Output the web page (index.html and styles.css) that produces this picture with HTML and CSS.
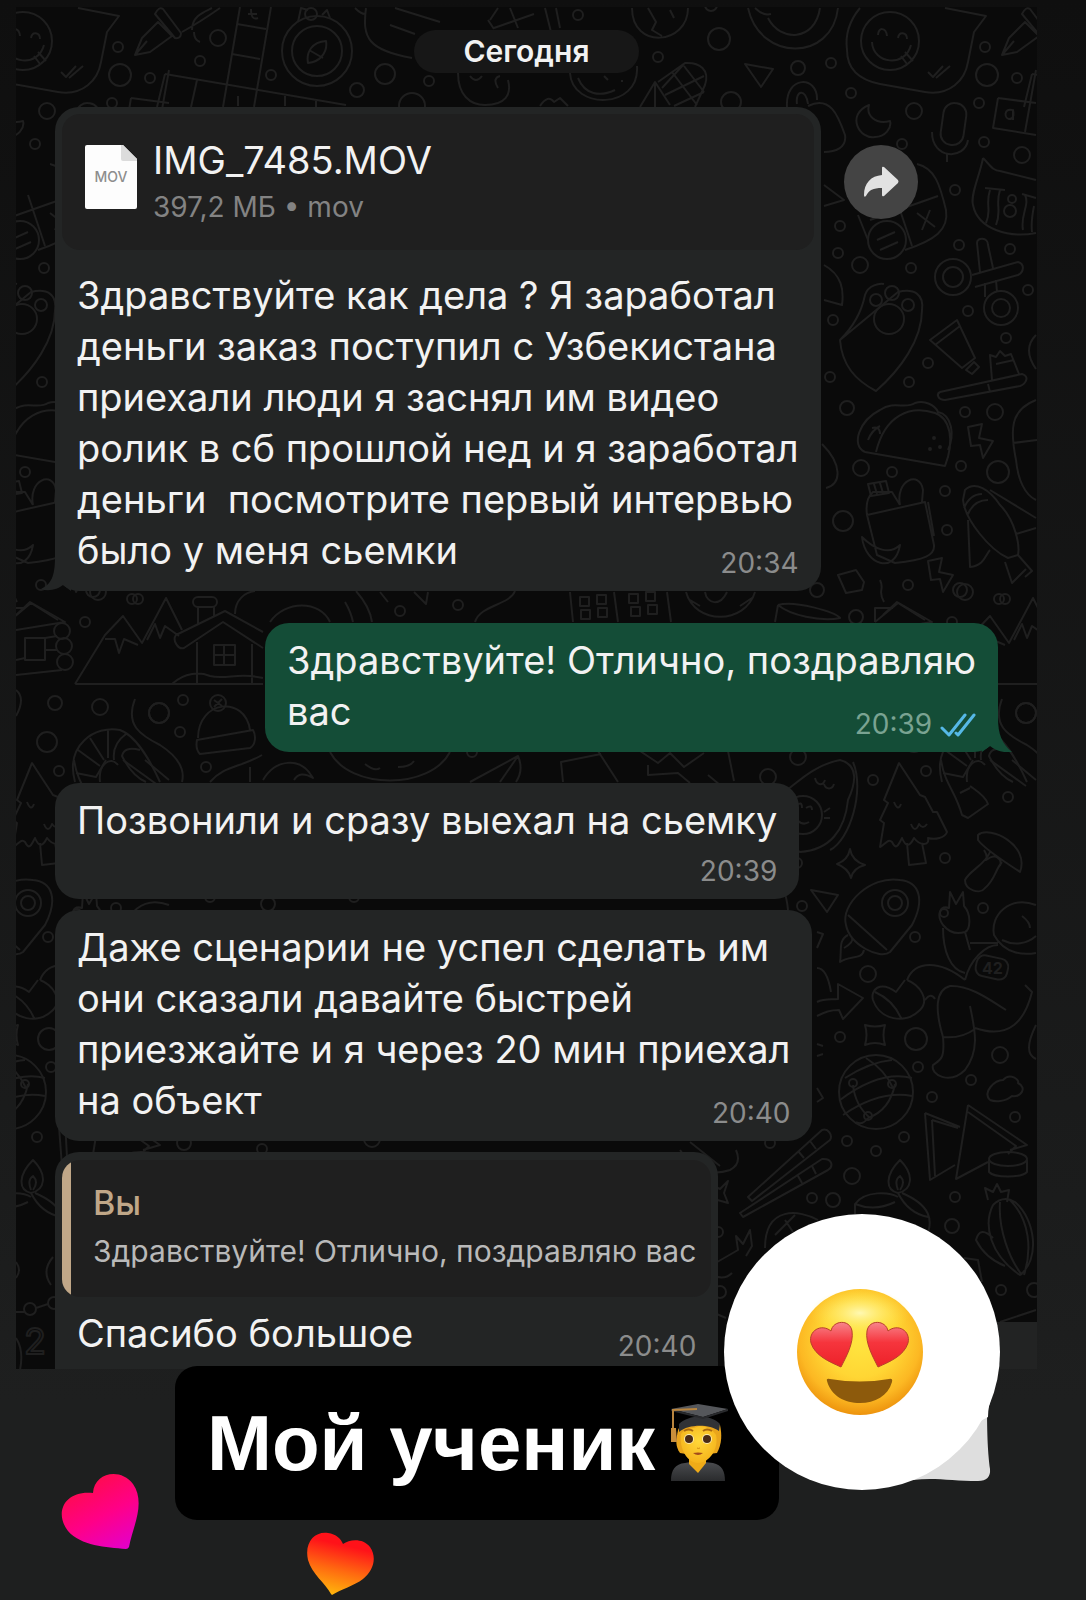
FILE: index.html
```
<!DOCTYPE html>
<html lang="ru">
<head>
  <meta charset="UTF-8">
  <meta name="viewport" content="width=device-width, initial-scale=1.0">
  <title>Мой ученик</title>
  <link rel="stylesheet" href="styles.css">
</head>

<body>
  <main class="story">
    <section class="chat">

      <!-- Wallpaper, the doodles repeat every 867 units -->
      <svg class="wallpaper" viewBox="16 7 1021 1363" preserveAspectRatio="xMinYMin slice" aria-hidden="true">
        <g id="doodles">
          <!-- bubbles -->
          <g>
            <circle cx="118" cy="47" r="5"/><circle cx="120" cy="75" r="11"/><circle cx="150" cy="78" r="5"/><circle cx="200" cy="61" r="5"/>
            <circle cx="218" cy="38" r="8"/><circle cx="271" cy="75" r="5"/><circle cx="357" cy="90" r="7"/><circle cx="385" cy="74" r="10"/>
            <circle cx="429" cy="81" r="5"/><circle cx="47" cy="111" r="8"/><circle cx="112" cy="103" r="5"/><circle cx="35" cy="144" r="5"/>
            <circle cx="412" cy="106" r="13"/><circle cx="578" cy="15" r="5"/><circle cx="711" cy="5" r="6"/><circle cx="719" cy="39" r="11"/>
            <circle cx="658" cy="57" r="5"/><circle cx="798" cy="68" r="7"/><circle cx="831" cy="63" r="5"/><circle cx="851" cy="93" r="5"/>
            <circle cx="731" cy="102" r="10"/><circle cx="984" cy="142" r="5"/><circle cx="1022" cy="155" r="8"/><circle cx="955" cy="190" r="5"/>
            <circle cx="840" cy="226" r="5"/><circle cx="838" cy="253" r="5"/><circle cx="860" cy="265" r="8"/><circle cx="911" cy="268" r="5"/>
            <circle cx="959" cy="245" r="5"/><circle cx="1010" cy="249" r="5"/><circle cx="1028" cy="290" r="5"/><circle cx="968" cy="311" r="5"/>
            <circle cx="1006" cy="338" r="5"/><circle cx="833" cy="320" r="5"/><circle cx="928" cy="363" r="5"/><circle cx="909" cy="382" r="5"/>
            <circle cx="830" cy="377" r="5"/><circle cx="847" cy="408" r="7"/><circle cx="965" cy="412" r="5"/><circle cx="995" cy="412" r="8"/>
            <circle cx="861" cy="468" r="8"/><circle cx="892" cy="472" r="5"/><circle cx="961" cy="466" r="5"/><circle cx="998" cy="472" r="11"/>
            <circle cx="945" cy="491" r="5"/><circle cx="843" cy="521" r="10"/><circle cx="947" cy="530" r="5"/><circle cx="817" cy="590" r="7"/>
            <circle cx="908" cy="585" r="5"/><circle cx="965" cy="592" r="8"/><circle cx="1005" cy="599" r="5"/><circle cx="856" cy="617" r="7"/>
            <circle cx="1026" cy="713" r="10"/><circle cx="798" cy="757" r="8"/><circle cx="768" cy="777" r="8"/><circle cx="873" cy="780" r="5"/>
            <circle cx="926" cy="771" r="5"/><circle cx="797" cy="863" r="5"/><circle cx="802" cy="906" r="5"/><circle cx="915" cy="937" r="5"/>
            <circle cx="945" cy="858" r="5"/><circle cx="983" cy="908" r="5"/><circle cx="1008" cy="797" r="5"/><circle cx="868" cy="974" r="8"/>
            <circle cx="840" cy="1037" r="5"/><circle cx="916" cy="1039" r="11"/><circle cx="1000" cy="1055" r="8"/><circle cx="918" cy="1067" r="5"/>
            <circle cx="971" cy="1080" r="5"/><circle cx="932" cy="1097" r="5"/><circle cx="1015" cy="1117" r="5"/><circle cx="904" cy="1137" r="5"/>
            <circle cx="847" cy="1141" r="5"/><circle cx="876" cy="1151" r="5"/><circle cx="770" cy="1143" r="5"/><circle cx="852" cy="1176" r="8"/>
            <circle cx="833" cy="1200" r="7"/><circle cx="812" cy="1198" r="5"/><circle cx="955" cy="1197" r="5"/><circle cx="952" cy="1226" r="7"/>
            <circle cx="132" cy="599" r="5"/><circle cx="85" cy="622" r="5"/><circle cx="93" cy="590" r="7"/><circle cx="55" cy="703" r="7"/>
            <circle cx="100" cy="707" r="8"/><circle cx="183" cy="700" r="5"/><circle cx="180" cy="732" r="5"/><circle cx="47" cy="742" r="10"/>
            <circle cx="206" cy="767" r="5"/><circle cx="400" cy="611" r="5"/><circle cx="458" cy="605" r="5"/><circle cx="472" cy="752" r="5"/>
            <circle cx="718" cy="1232" r="5"/><circle cx="720" cy="1292" r="6"/><circle cx="1001" cy="1290" r="5"/><circle cx="1034" cy="1290" r="7"/>
            <circle cx="268" cy="904" r="7"/><circle cx="210" cy="897" r="5"/><circle cx="354" cy="897" r="5"/><circle cx="184" cy="1143" r="7"/>
            <circle cx="262" cy="1149" r="5"/><circle cx="372" cy="1139" r="8"/>
          </g>
          <!-- smiling speech balloon -->
          <circle cx="890" cy="41" r="29"/>
          <path d="M860 8C850 20 845 35 847 50C847 70 860 80 880 84L925 92C950 96 965 80 968 62L974 32L986 16L945 8M878 35c0-8 8-8 9 1M898 38c1-7 9-6 9 1M872 42C873 64 905 68 911 45M901 56l6 8M905 52l8 9M928 72l5 5 10-11M936 78l14-12"/>
          <!-- pen -->
          <path d="M135 55L142 38L158 22L172 36L150 52ZM135 55l12-14M155 14q4-8 8-5l18 24q0 6-6 5zM182 32C200 22 210 15 220 8M192 30c0-14 12-18 20-22M194 32q0 8 6 10"/>
          <!-- compass -->
          <circle cx="317" cy="51" r="35"/><circle cx="317" cy="51" r="25"/><circle cx="311" cy="14" r="6"/>
          <path d="M308 63C306 52 312 42 326 41C328 52 320 62 308 63ZM309 50l14 8M298 22l3-14 7 2M322 15l5-5 3 8"/>
          <!-- crossword -->
          <path d="M240 7L223 107M271 7L254 107M237 24L266 29M232 54L260 59M165 74L346 105M165 74L157 107M197 80L191 107M285 96v10M316 101v6M251 9q0 12 7 9M248 14h9M238 96v10M998 98l38 5M998 98l-5 30 43 7M1036 70l-11 62M1012 110c-8-2-8 8-3 9q6 0 4-9v10"/>
          <!-- hand, planets, faces along the top -->
          <path d="M366 8C362 38 368 50 412 58M390 25L415 34M395 8L440 22M355 8q6 6 10 6M458 73C458 95 470 105 485 105C505 105 512 95 508 80M470 76q6 8 12 0M498 88q-6-10 2-12M490 20l8-12M488 20l6 9M494 28l40-14M510 8l8 20M570 73C572 110 640 110 637 66M578 78C585 95 600 97 615 90M540 106q8-12 14-4l6-4 8 8M604 76l4 4M622 80v2M632 8C632 50 688 45 688 8M648 8l8 14-4 8 10 6M670 10l4 8M748 8C760 62 832 62 838 8M768 18C780 42 815 42 820 8M755 8q8 8 16 6M545 8l6 24M556 8l4 20"/>
          <!-- corn -->
          <path d="M640 107L655 82L670 105M655 84v24M658 82L685 63C700 62 710 70 705 85L695 107M672 72L697 105M684 66l20 26M665 95L704 76M674 106l30-14M662 88l22-24"/>
          <path d="M745 64L773 69L761 87Z"/>
          <!-- paper clip, moon, microphone -->
          <path d="M787 107C785 75 818 75 817 100M797 104C795 90 806 88 808 104M808 106C830 95 838 115 845 135C847 148 835 152 824 152M824 185l20 15-20 6M824 265c18 10 20 25 18 40l-18-5M869 105C845 115 860 140 875 137C885 137 892 128 890 121C875 125 866 115 869 105ZM932 132C932 160 965 160 968 140M947 153v9"/>
          <rect x="942" y="103" width="23" height="42" rx="11" transform="rotate(8 953 124)"/>
          <!-- cat -->
          <path d="M983 158C990 165 993 171 1000 171L1036 180M983 158C980 175 970 195 973 205C978 230 1010 238 1036 233M985 188l20 2M1022 194l14 4M990 190c-5 15 2 20-4 33M1000 190c-5 15 2 20-4 35M1025 195c5 10-5 20-2 35M1034 206c-2 10-3 18-2 26"/>
          <circle cx="1010" cy="211" r="6"/><circle cx="1012" cy="199" r="4"/>
          <!-- calculator -->
          <path d="M917 164C935 168 940 185 946 210C949 230 935 240 905 250M858 215L868 240M912 246L895 195M870 220L938 196M877 240l18-8M880 250l18-8M917 213l18 14M930 210l-8 20"/>
          <circle cx="887" cy="240" r="19"/>
          <!-- scissors -->
          <circle cx="953" cy="277" r="18"/><circle cx="953" cy="277" r="10"/><circle cx="1001" cy="308" r="17"/><circle cx="1001" cy="308" r="9"/>
          <path d="M972 275L1018 262C1025 264 1024 272 1018 275L975 287M980 272L977 243C977 237 988 237 988 245L993 268M985 283v14M996 280l1 12"/>
          <!-- paw on a guitar pick -->
          <path d="M840 340C855 325 862 310 865 295C868 285 880 283 884 284M898 292C915 288 924 295 922 310C922 340 900 370 876 391C855 380 842 365 840 340Z"/>
          <circle cx="889" cy="319" r="15"/><circle cx="876" cy="300" r="6"/><circle cx="892" cy="293" r="7"/><circle cx="908" cy="305" r="6"/>
          <!-- tube and brush -->
          <path d="M930 340L957 320L975 358L962 368ZM935 345l25-19M966 370l8-8 5 5-7 7zM940 392L1022 374C1030 376 1026 384 1020 386L945 400C938 400 936 394 940 392M992 380L990 355l6 2 4-6 5 5 6-2 8 20M988 384l2 8M996 364l18-4"/>
          <!-- taco -->
          <path d="M865 452L945 466C955 440 950 418 935 413C910 405 885 415 876 452M865 452C850 445 860 420 880 410C895 400 905 410 915 403C925 400 935 405 938 412C952 415 955 435 948 450M872 428q8-2 8 6M868 440q4-10 12-14"/>
          <circle cx="934" cy="438" r="1"/><circle cx="930" cy="449" r="1"/><circle cx="940" cy="447" r="1"/>
          <path id="bolt" d="M968 427l14-3-3 14 14 3-10 17-3-13-9 1z"/>
          <use href="#bolt" x="-40" y="134"/>
          <!-- lunch bag -->
          <path d="M867 515L925 502L934 545C935 555 925 560 895 563L877 555ZM867 515C865 500 870 495 873 492L892 492L900 505M868 484l18-3 3 12-18 3zM874 484l3 10M880 483l3 10M900 505C895 480 920 470 923 490L922 502M928 502l6 34M862 537C865 565 895 575 900 545C890 555 875 550 862 537ZM822 444c20 20 20 40 4 44M838 575l18-5 8 12-2 8-16 3z"/>
          <!-- shrimp roll -->
          <path d="M965 490C975 480 990 490 1000 505C1015 520 1020 545 1018 555L1008 558C990 550 965 520 963 500ZM964 508q6-14 18-14M968 514q6-14 20-14M968 520L970 567C985 565 985 555 990 550M990 490L1036 518M1005 562l7 21 14-14M1018 555l14 16-7 6M1016 534L1036 528M1036 400C1010 410 1010 430 1016 460C1018 480 1025 495 1036 500M1013 443l24-3M1036 335q-14 14 0 34"/>
          <!-- mountains and houses -->
          <path d="M75 684L105 635L123 616L142 643L166 598L182 630M75 684H263M105 639l10 0 4 14 5-14 14 6M147 640l8-16 5 14 5-12 14 10M176 635C172 640 178 650 184 648L223 622L263 648M176 635L225 611L263 632M197 642V684M252 644v40M224 645v20M214 655h21M198 607v18M214 607v10M172 684C185 672 200 672 210 676C225 680 240 672 263 678M235 614C235 600 245 592 255 591M270 622C285 600 320 600 330 622M345 602q6 10 8 20M356 591q14 16 16 31M475 622C480 605 510 605 515 591"/>
          <rect x="214" y="645" width="21" height="20"/><rect x="193" y="597" width="24" height="10" rx="5"/>
          <path d="M16 615L30 602L65 622L16 630M16 675L62 670M45 638l12-2M45 650l12 0M16 660l9-2"/>
          <circle cx="62" cy="631" r="8"/><circle cx="64" cy="646" r="8"/><circle cx="65" cy="662" r="8"/><rect x="25" y="638" width="20" height="22"/>
          <!-- buildings, doughnut, cup, letter -->
          <path d="M570 592l3 30M614 592l4 30M667 592l4 30M686 592C695 625 745 625 755 592M705 592c2 12 15 15 22 0M690 600l10 6M740 606l12-8M778 605L775 622M778 605C795 600 835 612 840 618C820 622 790 615 778 605M875 622v-14h18M875 622L898 603L925 620M880 580c5 10-3 10 4 22M380 592l8 10M414 592l12 12 2-12"/>
          <rect x="580" y="597" width="9" height="9"/><rect x="597" y="595" width="9" height="9"/><rect x="581" y="610" width="9" height="9"/><rect x="598" y="608" width="9" height="9"/>
          <rect x="629" y="594" width="9" height="9"/><rect x="646" y="592" width="9" height="9"/><rect x="631" y="607" width="9" height="9"/><rect x="648" y="605" width="9" height="9"/>
          <!-- hat and prawn -->
          <circle cx="159" cy="713" r="10"/><circle cx="218" cy="703" r="8"/>
          <path d="M197 740L253 730C256 735 256 745 250 748L200 754C196 750 196 745 197 740ZM198 738C198 700 245 695 250 730M214 700l8 6M222 699l-8 8M75 782C65 745 95 725 120 730C135 735 150 760 160 782M100 782C98 765 110 755 118 765M78 750l22 16M90 738l14 22M108 730l0 28M126 734q-14 10-12 26M140 750q-16-4-18 6 10 20 24 26M135 699C125 725 140 735 160 745C180 758 185 770 182 782M16 690q10 8 0 26"/>
          <path d="M210 782C225 765 240 768 262 755M250 767v15M263 780C275 760 300 755 313 778Q300 770 294 780M330 752C350 790 430 790 450 752M365 764q10 8 15 4M398 767q12 0 16-6M470 782L518 756Q524 770 516 782M500 782l18-26M563 782l-2-20 40-8M598 751l20 31M640 751l18 12 12-10 14 14 20-14M648 765v10l30-2 12 10M708 775l12 10M728 751l6 30"/>
          <!-- avocado -->
          <path d="M787 790C800 780 815 765 840 760C860 765 855 785 848 800C845 830 830 850 800 852L788 846M853 762C865 790 850 840 830 850M815 778c2 8 8 8 10 2M824 784c2 6 8 6 10 0M796 806q6-6 6 2M806 808q6-4 6 2M797 820q6 6 12 2M824 812l6-4M824 818h6"/>
          <circle cx="803" cy="815" r="19"/>
          <!-- fir tree -->
          <path d="M899 763L884 800L888 803L880 820L884 823L880 847C885 845 888 838 892 842C896 850 898 846 902 838C906 848 910 846 914 838C920 846 930 846 928 838C935 840 945 838 947 832L937 812L933 812L925 797L920 795ZM907 843l2 22 17-2-4-20M894 802q4 10 7 2M911 824q4 10 8 0 4 6 8 0"/>
          <!-- sweet and mushroom -->
          <path d="M941 760C945 785 955 790 962 815L968 818 988 804C985 795 975 790 970 786M943 773l20 4 10-17M960 793l10-5M990 760l36 26M1012 760l24 20M978 835C990 825 1030 845 1020 872C1010 865 985 850 978 840ZM990 852C985 865 970 870 965 880C965 890 980 895 985 888C995 880 995 870 1002 862M984 850q4 6 2 10 8-6 12-2 4 2 2 8"/>
          <!-- stars -->
          <path d="M850 849Q852 861 865 865Q853 868 851 878Q848 868 837 864Q848 860 850 849ZM865 1025q10 3 20 0q-3 10 0 20q-10-4-20 0q3-10 0-20zM811 890l27 5-11 17z"/>
          <!-- rocket -->
          <path d="M846 925C840 905 870 875 900 880C920 882 925 900 912 925L890 952C880 960 850 945 846 925ZM848 915L887 950M848 935C838 940 842 950 840 962C850 955 862 960 864 950M844 948q10-6 8-10M783 888q4 10 5 22M817 932l6 2-6 14M817 968q10 0 14 24"/>
          <circle cx="895" cy="903" r="13"/><circle cx="895" cy="903" r="7"/>
          <!-- astronaut -->
          <path d="M943 925C936 915 940 905 949 908L950 892l6 12 7-12 1 14C972 915 970 930 965 932Q952 936 943 925M943 928C943 950 950 970 965 973M970 950l-5-18M970 943H998M1036 905C1010 895 990 915 994 935C1005 955 1025 955 1036 953M1002 940c12 6 25 4 34-4M1022 916q8 6 8 12M965 980C970 960 985 945 998 945M907 980C915 960 940 960 965 980M905 980L896 992C880 980 870 990 873 1000C880 1020 905 1025 920 1010C930 1000 920 985 907 980M875 992q18 8 26 26M925 1000q6-8 10-1M943 1037C935 1010 935 990 950 986C970 985 990 1000 1006 1010M970 1006C975 1030 980 1050 965 1070C950 1085 930 1075 933 1065C940 1060 945 1060 943 1037M943 1037q18 2 32-8M975 1028C1010 1040 1025 1020 1032 992L1025 985"/>
          <rect x="976" y="957" width="32" height="21" rx="8" transform="rotate(12 992 967)"/>
          <circle cx="944" cy="913" r="4"/>
          <!-- arrow, globe, cloud -->
          <path d="M817 1002C825 998 832 1000 838 999L838 984L863 998L843 1019L839 1010C830 1010 825 1012 817 1016M817 1044l6 2M817 1056l6-2M817 1088l6 10-6 4M845 1078Q870 1062 892 1060M840 1100Q880 1070 912 1078M843 1115Q880 1090 912 1096M853 1085Q855 1105 870 1118M866 1058Q885 1070 893 1088M868 1118Q890 1110 895 1084M868 1118Q862 1126 856 1122M990 1100C982 1092 995 1080 1003 1080C1010 1072 1020 1080 1018 1083C1028 1088 1020 1098 1012 1096C1005 1102 995 1102 990 1100M1036 1025q-14 28 0 34"/>
          <circle cx="876" cy="1092" r="37"/><circle cx="853" cy="1083" r="4"/><circle cx="892" cy="1084" r="4"/><circle cx="868" cy="1116" r="4"/>
          <!-- sandwich and sushi -->
          <path d="M925 1113L960 1127M925 1113L930 1180L955 1165M932 1120l3 56M932 1120l26 8M968 1105L1027 1145L1010 1150M968 1105L956 1179L988 1162M968 1112l48 34-8 8M989 1160v12c5 6 33 6 38 0v-12"/>
          <ellipse cx="1008" cy="1159" rx="19" ry="7"/>
          <!-- chopsticks -->
          <path d="M748 1197L822 1130C828 1128 833 1135 830 1140L752 1201ZM740 1213L822 1159C832 1158 834 1166 828 1170L743 1217ZM798 1151l6 7M810 1141l6 8M798 1176l4 7M812 1166l4 8"/>
          <!-- candle, cactus, lemon -->
          <path d="M900 1160C885 1175 885 1190 898 1193C912 1190 915 1175 900 1160ZM898 1190q-4-10 2-14 6 6 0 14M855 1214V1204C865 1190 890 1192 898 1197M855 1204q20 8 40-2M902 1193C930 1205 935 1220 925 1240M898 1193q10 20 30 24M988 1200l-3-12 8 4 4-8 4 8 8-2-2 12M993 1205C983 1225 990 1255 1020 1275C1040 1260 1036 1220 1015 1202C1005 1196 998 1200 993 1205M1000 1202C998 1230 1010 1260 1022 1275M1010 1200c20 20 22 50 14 75M993 1238Q980 1225 976 1240Q985 1258 1005 1266M765 1248C765 1205 800 1210 818 1220M775 1235l20-20M785 1220l8 12M712 1265L738 1250 736 1236 743 1244 750 1230 752 1246 746 1256M712 1185l8 4 8-8-4 12 4 10-14-4M680 1150q20 30 50 20 12-6 6-20M690 1142l30 24M964 1258l14 2 4 22M1000 1322l36-12M712 1312l14 6M712 1275q12 6 20-2"/>
          <!-- left edge -->
          <circle cx="30" cy="1309" r="6"/><circle cx="54" cy="1303" r="6"/>
          <path d="M16 1312h8M36 1308l12-4M16 1338q8 12 4 32M53 1257q-12 14-2 28M16 1262q6 8 0 16"/>
        </g>
        <use href="#doodles" x="-867"/>
        <use href="#doodles" x="867"/>
        <text class="doodle-num" x="982" y="974">42</text>
        <text class="doodle-num big" x="24" y="1354">2</text>
      </svg>

      <div class="composer"></div>

      <time class="date">Сегодня</time>

      <article class="bubble in first">
        <div class="file">
          <svg class="file-icon" viewBox="0 0 52 64" aria-hidden="true">
            <path d="M2 0H38L52 14V62Q52 64 50 64H2Q0 64 0 62V2Q0 0 2 0Z" fill="#fdfdfd"/>
            <path d="M36 0H38L52 14V16H38Q36 16 36 14Z" fill="#dcdcdc"/>
            <text x="26" y="37" text-anchor="middle" class="file-ext">MOV</text>
          </svg>
          <div>
            <div class="file-name">IMG_7485.MOV</div>
            <div class="file-info">397,2 МБ • mov</div>
          </div>
        </div>
        <p>Здравствуйте как дела ? Я заработал<br>деньги заказ поступил с Узбекистана<br>приехали люди я заснял им видео<br>ролик в сб прошлой нед и я заработал<br>деньги&nbsp; посмотрите первый интервью<br>было у меня сьемки</p>
        <time>20:34</time>
        <svg class="tail" viewBox="0 0 30 34" aria-hidden="true"><path d="M14 0C14 20 10 27 0 32C8 35 17 32 22 28L30 34V0Z" fill="#232525"/></svg>
      </article>

      <article class="bubble out">
        <p>Здравствуйте! Отлично, поздравляю<br>вас</p>
        <time>20:39
          <svg class="ticks" viewBox="0 0 36 24" aria-label="Прочитано"><path d="M2 15L9 22L25 2M16 20L18 22L34 2" fill="none" stroke="#56b8e6" stroke-width="3" stroke-linecap="round" stroke-linejoin="round"/></svg>
        </time>
        <svg class="tail" viewBox="0 0 30 34" aria-hidden="true"><path d="M16 0C16 16 20 26 30 34C22 35 14 33 8 28L0 34V0Z" fill="#144d37"/></svg>
      </article>

      <article class="bubble in">
        <p>Позвонили и сразу выехал на сьемку</p>
        <time class="below">20:39</time>
      </article>

      <article class="bubble in">
        <p>Даже сценарии не успел сделать им<br>они сказали давайте быстрей<br>приезжайте и я через 20 мин приехал<br>на объект</p>
        <time>20:40</time>
      </article>

      <article class="bubble in last">
        <blockquote class="quote">
          <b>Вы</b>
          <span>Здравствуйте! Отлично, поздравляю вас</span>
        </blockquote>
        <p>Спасибо большое</p>
        <time>20:40</time>
      </article>

      <button class="forward" type="button" aria-label="Переслать">
        <svg viewBox="0 0 36 32"><path d="M19 2Q19 0 21 1L35 14Q36 15.500 35 17L21 30Q19 31 19 29V22C10 22 6 24 3 30Q1 32 1 29C1 17 8 10 19 9Z" fill="#e2e2e2"/></svg>
      </button>
    </section>

    <h1 class="caption">Мой ученик
      <svg class="student" viewBox="0 0 60 78" aria-hidden="true">
        <defs>
          <linearGradient id="gown" x1="0" y1="0" x2="0" y2="1"><stop offset="0" stop-color="#4b4d50"/><stop offset="1" stop-color="#2a2b2d"/></linearGradient>
          <radialGradient id="skin" cx=".5" cy=".4" r=".6"><stop offset="0" stop-color="#ffd83a"/><stop offset="1" stop-color="#f5b31b"/></radialGradient>
        </defs>
        <path d="M2 77C2 66 6 60 16 59L27 57 44 59C53 61 56 67 56 77Z" fill="url(#gown)"/>
        <path d="M20 52H37V59L29 69L20 60Z" fill="#efab18"/>
        <path d="M9 26C7 36 6 42 11 49L17 50H40L48 49C53 40 53 30 51 21L12 20Z" fill="#e9a51c"/>
        <path d="M12 30C16 24 24 25 30 22C38 22 44 26 47 31C50 44 41 59 29 59C18 59 10 44 12 30Z" fill="url(#skin)"/>
        <path d="M10 20C20 10 42 10 51 20L50 27C40 20 20 20 10 28Z" fill="#303236"/>
        <path d="M2 5L29 0L59 5L34 13Z" fill="#55575b"/>
        <path d="M2 5L34 13L59 5V7L34 15L2 7Z" fill="#292a2d"/>
        <path d="M28 5L4 6V26" fill="none" stroke="#b9853f" stroke-width="2"/>
        <path d="M2 24H7L8 38H2Z" fill="#c98f3c"/>
        <circle cx="20" cy="35" r="5" fill="#fbe9b0"/><circle cx="38" cy="35" r="5" fill="#fbe9b0"/>
        <circle cx="20" cy="35" r="4" fill="#4a2b16"/><circle cx="38" cy="35" r="4" fill="#4a2b16"/>
        <path d="M15 27Q20 24 24 27M34 27Q38 24 43 27" fill="none" stroke="#a9670f" stroke-width="2"/>
        <path d="M28 44Q29 45 31 44" fill="none" stroke="#d18d12" stroke-width="1"/>
        <path d="M24 49Q29 48 34 49Q29 53 24 49Z" fill="#a24b1b"/>
      </svg>
    </h1>

    <!-- Reaction sticker -->
    <svg class="reaction" viewBox="0 0 280 280" role="img" aria-label="😍">
      <defs>
        <radialGradient id="face" cx=".5" cy=".4" r=".6"><stop offset="0" stop-color="#ffe640"/><stop offset=".5" stop-color="#ffd634"/><stop offset=".8" stop-color="#fcb823"/><stop offset="1" stop-color="#ed930d"/></radialGradient>
        <radialGradient id="shine"><stop offset="0" stop-color="#fffcc0" stop-opacity=".9"/><stop offset="1" stop-color="#ffec50" stop-opacity="0"/></radialGradient>
        <linearGradient id="eye" x1="0" y1="0" x2="0" y2="1"><stop offset="0" stop-color="#f7848b"/><stop offset=".45" stop-color="#f6353d"/><stop offset="1" stop-color="#ed2129"/></linearGradient>
      </defs>
      <path d="M264 190C264 225 265 240 267 256Q268 268 255 268C230 268 210 264 190 267Z" fill="#dedede"/>
      <circle cx="139" cy="139" r="138" fill="#fff"/>
      <path d="M270 180Q265 192 265 204L250 212Z" fill="#fff"/>
      <circle cx="137" cy="139" r="63" fill="url(#face)"/>
      <ellipse cx="137" cy="100" rx="50" ry="24" fill="url(#shine)"/>
      <path d="M118 154C107 149 92 143 88 130C85 118 98 110 108 118C110 107 127 106 129 118C131 130 123 144 118 154Z" fill="url(#eye)" stroke="#b8402a" stroke-width="1"/>
      <path d="M155 154C166 149 181 143 185 130C188 118 175 110 165 118C163 107 146 106 144 118C142 130 150 144 155 154Z" fill="url(#eye)" stroke="#b8402a" stroke-width="1"/>
      <path d="M104 168Q103 165 107 166Q137 171 166 166Q170 165 169 169C165 183 152 190 137 190C122 190 108 183 104 168Z" fill="#8d5a0c"/>
    </svg>

    <svg class="heart pink" viewBox="0 0 80 78" aria-hidden="true">
      <defs><linearGradient id="pinkfill" x1=".3" y1=".1" x2=".8" y2="1"><stop offset="0" stop-color="#ff0b4d"/><stop offset=".5" stop-color="#ff0087"/><stop offset="1" stop-color="#e400c8"/></linearGradient></defs>
      <path d="M65 76C45 74 20 73 7 58C-7 40 3 17 32 20C33 0 59-6 72 11C85 30 72 53 68 74Q67 76 65 76Z" fill="url(#pinkfill)"/>
    </svg>
    <svg class="heart orange" viewBox="0 0 68 64" aria-hidden="true">
      <defs><linearGradient id="orangefill" x1=".6" y1="0" x2=".35" y2="1"><stop offset=".2" stop-color="#ff1219"/><stop offset=".6" stop-color="#ff6a10"/><stop offset="1" stop-color="#ffb80c"/></linearGradient></defs>
      <path d="M24 62C18 51 5 42 1 28C-3 10 8-1 21 1C29 2 34 7 36 12C43 7 56 6 63 15C70 25 67 38 56 47C47 54 34 57 25 63Z" fill="url(#orangefill)"/>
    </svg>
  </main>
</body>
</html>
```
FILE: styles.css
```
* {
    box-sizing: border-box;
}

body {
    margin: 0;
    min-height: 100vh;
    font-family: Inter, "Noto Sans", sans-serif;
    color: #f2f2f2;
    background: linear-gradient(#0f0f0f, #1b1c1c 1200px, #1e1f1f 1400px);
}

p,
h1,
blockquote {
    margin: 0;
}

.story {
    position: relative;
    padding: 7px 49px 0 16px;
    min-height: 1600px;
}

.chat {
    position: relative;
    display: flex;
    flex-direction: column;
    align-items: flex-start;
    padding: 23px 39px 0;
    background: #0a0a0a;
}

.wallpaper {
    position: absolute;
    inset: 0;
    width: 100%;
    height: 100%;
    fill: none;
    stroke: #1f1f1f;
    stroke-width: 2;
    stroke-linejoin: round;
}

.doodle-num {
    font-size: 16px;
    font-weight: 700;
    fill: #1f1f1f;
    stroke: none;
}

.doodle-num.big {
    font-size: 36px;
    font-weight: 400;
    fill: none;
    stroke: #1f1f1f;
}

.composer {
    position: absolute;
    right: 0;
    bottom: 0;
    width: 120px;
    height: 47px;
    background: #222323;
}

.date {
    position: relative;
    align-self: center;
    padding: 0 50px;
    margin-bottom: 34px;
    border-radius: 22px;
    background: #171717;
    font-size: 30px;
    font-weight: 600;
    line-height: 43px;
}

/* Messages */
.bubble {
    position: relative;
    display: flex;
    flex-direction: column;
    max-width: 780px;
    margin-bottom: 11px;
    padding: 12px 22px 14px;
    border-radius: 24px;
    background: #232525;
    font-size: 38px;
    line-height: 51px;
}

.bubble time {
    align-self: flex-end;
    margin-top: -27px;
    color: #8b8c8c;
    font-size: 28px;
    line-height: 28px;
}

.bubble time.below {
    margin-top: 11px;
}

.bubble.first {
    padding-top: 7px;
    margin-bottom: 32px;
}

.bubble.out {
    align-self: flex-end;
    margin-bottom: 31px;
    background: #144d37;
}

.bubble.out time {
    color: #7aa392;
}

.bubble.last {
    margin-bottom: 0;
    padding-top: 8px;
    padding-bottom: 9px;
    border-radius: 24px 24px 0 0;
}

.tail {
    position: absolute;
    bottom: 0;
    width: 30px;
    height: 34px;
}

.in .tail {
    left: -14px;
}

.out .tail {
    right: -14px;
}

.ticks {
    width: 36px;
    height: 24px;
    vertical-align: -3px;
}

/* Attached file */
.file {
    display: flex;
    gap: 16px;
    height: 136px;
    margin: 0 -15px 20px;
    padding: 24px 23px;
    border-radius: 18px;
    background: #1f1f1f;
}

.file-icon {
    width: 52px;
    height: 64px;
    margin-top: 7px;
}

.file-ext {
    fill: #8d8d8d;
    font-size: 14px;
    font-weight: 500;
}

.file-name {
    font-size: 38px;
    line-height: 45px;
}

.file-info {
    color: #838383;
    font-size: 28px;
    line-height: 48px;
}

/* Quoted message */
.quote {
    display: flex;
    flex-direction: column;
    height: 137px;
    margin: 0 -15px 11px;
    padding: 18px 15px 0 31px;
    border-radius: 18px;
    background: linear-gradient(to right, #c0a788 9px, #1f1f1f 9px);
    color: #b9b9b9;
    font-size: 30px;
    line-height: 49px;
}

.quote b {
    color: #c0a788;
    font-size: 34px;
    font-weight: 500;
}

.forward {
    position: absolute;
    top: 138px;
    left: 828px;
    display: flex;
    align-items: center;
    justify-content: center;
    width: 74px;
    height: 74px;
    padding: 0;
    border: 0;
    border-radius: 50%;
    background: #444;
}

.forward svg {
    width: 36px;
    height: 32px;
}

/* Stickers */
.caption {
    position: relative;
    display: flex;
    align-items: center;
    gap: 14px;
    width: fit-content;
    margin: -3px 0 0 159px;
    padding: 0 50px 0 32px;
    border-radius: 22px;
    background: #000;
    color: #fff;
    font-family: "Liberation Sans", Arial, sans-serif;
    font-size: 78px;
    font-weight: 700;
    line-height: 154px;
}

.student {
    width: 60px;
    height: 78px;
}

.reaction {
    position: absolute;
    top: 1213px;
    left: 723px;
    width: 280px;
    height: 280px;
}

.heart {
    position: absolute;
}

.pink {
    top: 1473px;
    left: 61px;
    width: 80px;
    height: 78px;
}

.orange {
    top: 1532px;
    left: 307px;
    width: 68px;
    height: 64px;
}
```
